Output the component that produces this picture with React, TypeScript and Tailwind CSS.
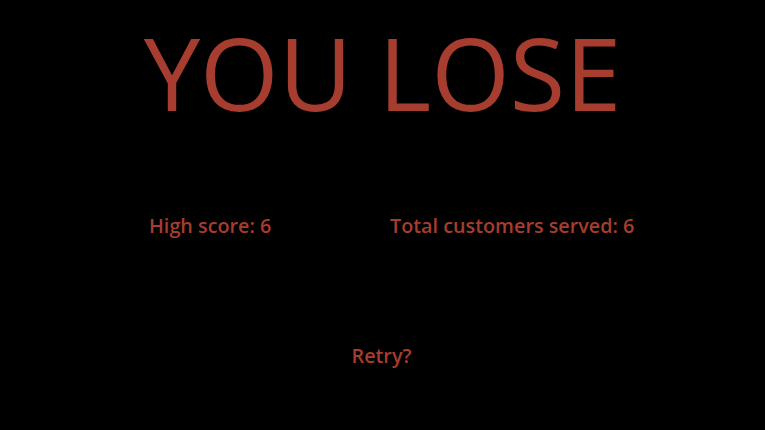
export default function App() {
  return (
    <div
      className="flex h-[430px] w-full flex-col items-center overflow-hidden bg-black text-[#a63d2e]"
      style={{ fontFamily: '"Open Sans", sans-serif' }}
    >
      <h1 className="mt-[10px] text-[101px] font-normal leading-[124px]">
        YOU LOSE
      </h1>

      <div className="mt-[80px] flex w-full pl-[149px] text-[19.8px] font-semibold leading-[24px]">
        <span className="w-[241px]">High score: 6</span>
        <span>Total customers served: 6</span>
      </div>

      <button className="mt-[106px] ml-[-2px] text-[19.8px] font-semibold leading-[24px]">
        Retry?
      </button>
    </div>
  )
}
